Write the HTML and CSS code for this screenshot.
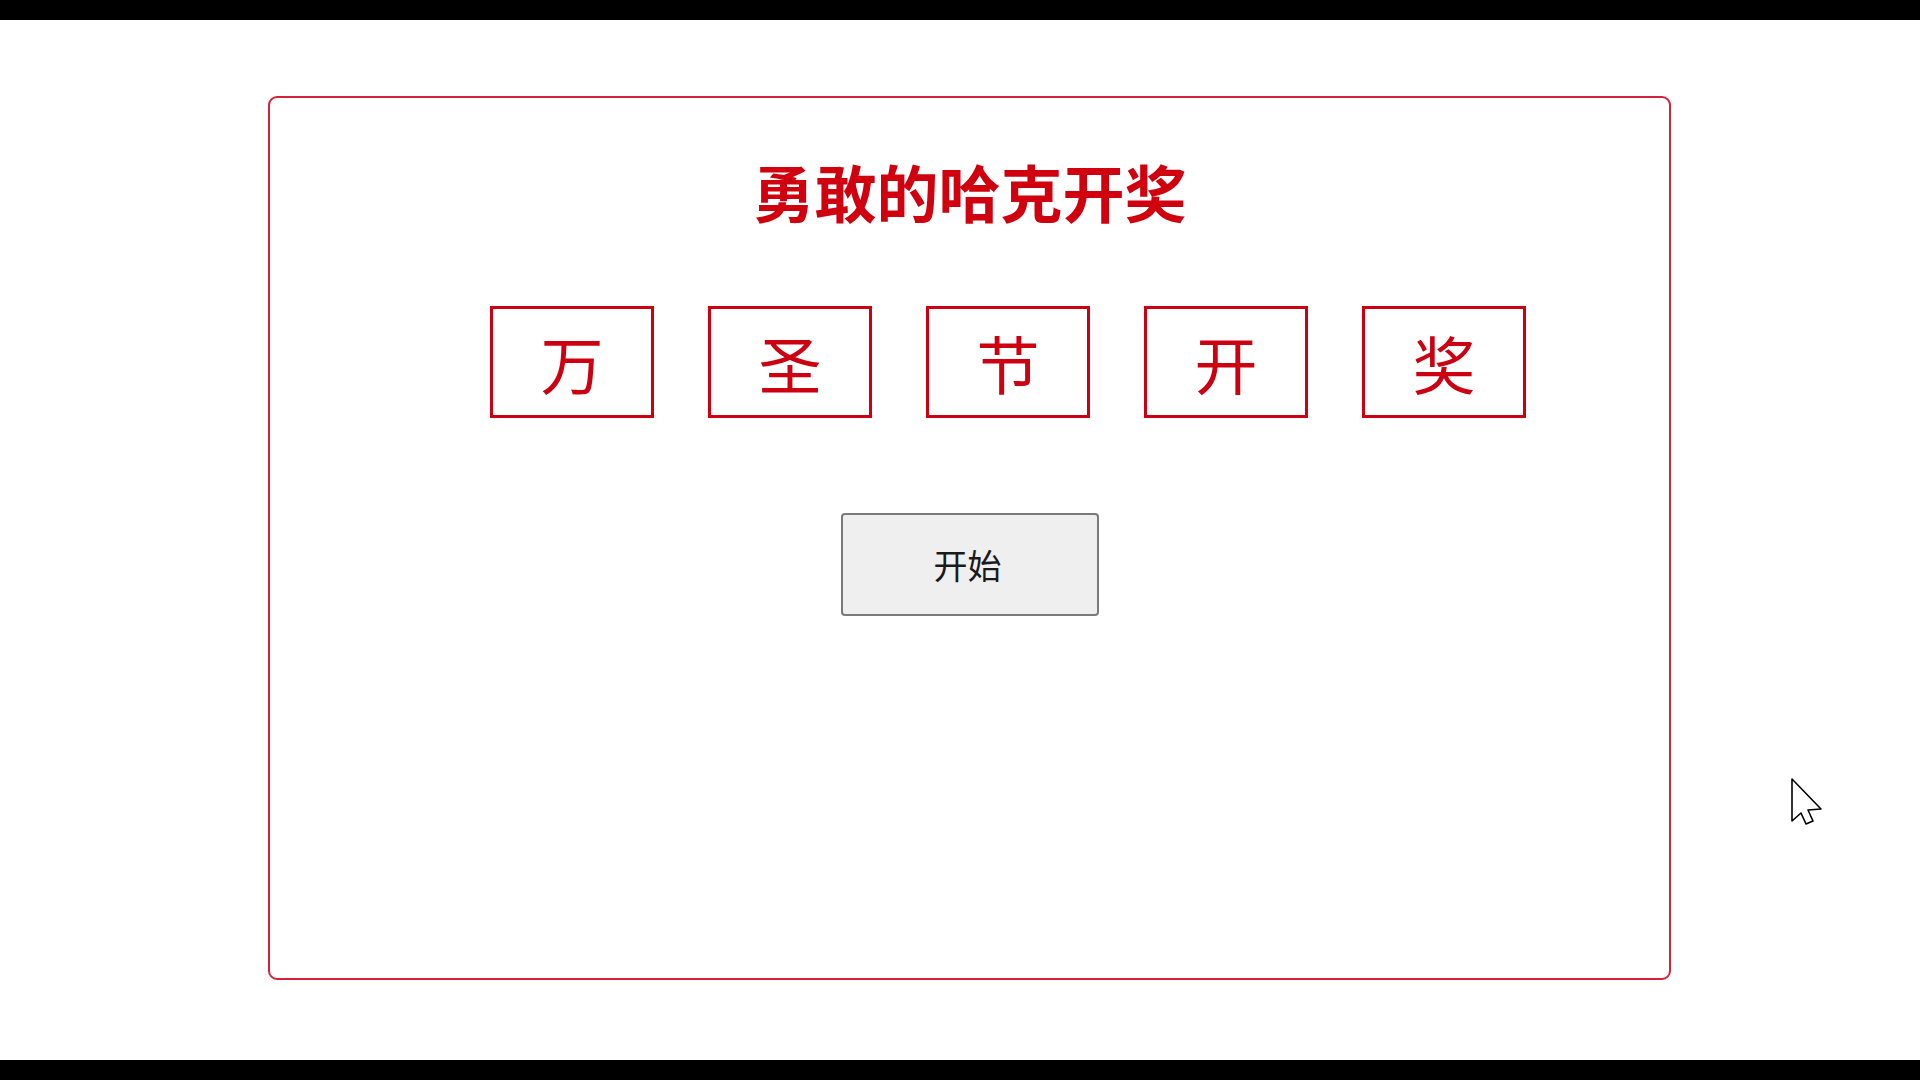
FILE: index.html
```html
<!DOCTYPE html>
<html lang="zh-CN">
<head>
<meta charset="utf-8">
<title>勇敢的哈克开奖</title>
<link rel="stylesheet" href="styles.css">
</head>
<body>
<div class="screen">
  <div class="bar"></div>
  <main class="stage">
    <section class="card">
      <h1 class="title">勇敢的哈克开奖</h1>
      <ul class="boxes">
        <li class="box">万</li>
        <li class="box">圣</li>
        <li class="box">节</li>
        <li class="box">开</li>
        <li class="box">奖</li>
      </ul>
      <button class="start" type="button">开始</button>
    </section>
    <svg class="cursor" width="32" height="48" viewBox="-1 -1 32 48" aria-hidden="true">
      <path d="M0 0 L0 42 L9 34 L14 45 L21 42 L16 31 L29 30 Z" fill="#fff" stroke="#000" stroke-width="1.6" stroke-linejoin="round"/>
    </svg>
  </main>
  <div class="bar"></div>
</div>
</body>
</html>
```
FILE: styles.css
```css
* { box-sizing: border-box; }
html, body { margin: 0; padding: 0; }
body {
  background: #fff;
  font-family: "Noto Sans CJK SC", "Noto Sans", sans-serif;
}
.screen {
  display: flex;
  flex-direction: column;
  height: 1080px;
  width: 1920px;
  overflow: hidden;
}
.bar {
  height: 20px;
  flex: 0 0 20px;
  background: #000;
}
.stage {
  position: relative;
  flex: 1 1 auto;
  padding: 76px 0 0 268px;
}
.card {
  width: 1403px;
  height: 884px;
  border: 2px solid #d3223a;
  border-radius: 9px;
  display: flex;
  flex-direction: column;
}
.title {
  margin: 60px 0 0;
  text-align: center;
  font-size: 62px;
  line-height: 66px;
  font-weight: 700;
  color: #d0000f;
  letter-spacing: 0;
}
.boxes {
  list-style: none;
  margin: 82px 0 0;
  padding: 0 0 0 220px;
  display: flex;
  gap: 54px;
}
.box {
  width: 164px;
  height: 112px;
  border: 3px solid #cc0010;
  display: flex;
  align-items: center;
  justify-content: center;
  font-size: 63px;
  font-weight: 400;
  line-height: 1;
  color: #cc0010;
  padding-bottom: 2px;
}
.start {
  align-self: center;
  margin: 95px 0 0;
  width: 258px;
  height: 103px;
  background: #efefef;
  border: 2px solid #7a7a7a;
  border-radius: 4px;
  font-family: "Noto Sans CJK SC", sans-serif;
  font-size: 34px;
  color: #1a1a1a;
  padding: 0 4px 0 0;
}
.cursor {
  position: absolute;
  left: 1791px;
  top: 758px;
}
```
